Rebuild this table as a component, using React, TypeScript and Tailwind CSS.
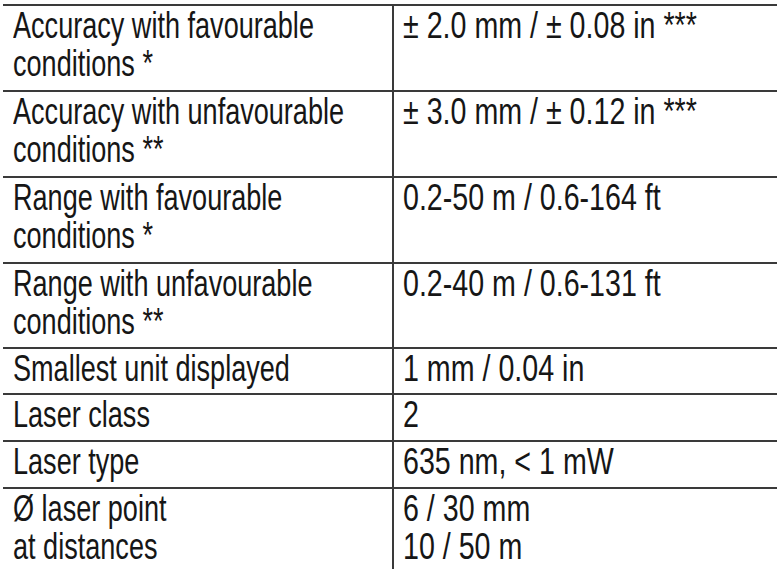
const rows: { label: string[]; value: string[]; h: string }[] = [
  { label: ["Accuracy with favourable", "conditions *"], value: ["± 2.0 mm / ± 0.08 in ***"], h: "h-[86px]" },
  { label: ["Accuracy with unfavourable", "conditions **"], value: ["± 3.0 mm / ± 0.12 in ***"], h: "h-[86px]" },
  { label: ["Range with favourable", "conditions *"], value: ["0.2-50 m / 0.6-164 ft"], h: "h-[86px]" },
  { label: ["Range with unfavourable", "conditions **"], value: ["0.2-40 m / 0.6-131 ft"], h: "h-[85px]" },
  { label: ["Smallest unit displayed"], value: ["1 mm / 0.04 in"], h: "h-[46px]" },
  { label: ["Laser class"], value: ["2"], h: "h-[47px]" },
  { label: ["Laser type"], value: ["635 nm, < 1 mW"], h: "h-[47px]" },
  { label: ["Ø laser point", "at distances"], value: ["6 / 30 mm", "10 / 50 m"], h: "h-[82px]" },
];

// narrow face isn't installed, so squeeze Liberation Sans horizontally
const Line = ({ text, wide }: { text: string; wide?: boolean }) => (
  <div className={`whitespace-nowrap origin-left ${wide ? "scale-x-[0.795]" : "scale-x-[0.752]"}`}>{text}</div>
);

export default function App() {
  return (
    <div
      className="w-[784px] h-[569px] overflow-hidden bg-white pl-[3px] pt-[4px] text-[#161616] text-[36px] leading-[38px]"
      style={{ fontFamily: '"Liberation Sans", Arial, sans-serif' }}
    >
      <div className="w-[774px]">
        {rows.map((r, i) => (
          <div key={i} className={`grid grid-cols-[391px_1fr] border-t-2 border-[#3a3a3a] ${r.h}`}>
            <div className="pl-[10px] pt-[1px] border-r-2 border-[#3a3a3a]">
              {r.label.map((t, j) => (
                <Line key={j} text={t} />
              ))}
            </div>
            <div className="pl-[9px] pt-[1px]">
              {r.value.map((t, j) => (
                <Line key={j} text={t} wide />
              ))}
            </div>
          </div>
        ))}
      </div>
    </div>
  );
}
